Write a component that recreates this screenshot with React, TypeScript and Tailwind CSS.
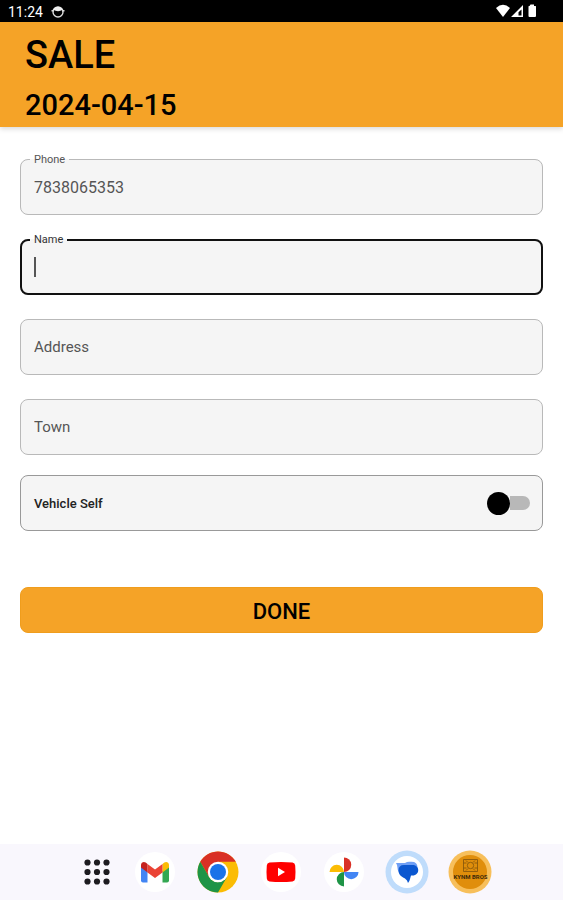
import React, { useState } from 'react';

const Field: React.FC<{ id: string; label: string; value: string; onChange: (value: string) => void }> = ({
  id,
  label,
  value,
  onChange,
}) => (
  <div className="h-14 rounded-lg border border-[#b9b9b9] bg-[#f5f5f5]">
    <input
      id={id}
      type="text"
      aria-label={label}
      placeholder={label}
      value={value}
      onChange={(e) => onChange(e.target.value)}
      className="h-full w-full bg-transparent px-[13px] text-[15px] text-[#444] outline-none placeholder:text-[#555]"
    />
  </div>
);

const StatusBar = () => (
  <div className="flex h-[22px] items-end justify-between bg-black pr-[23px] pl-2 text-white">
    <div className="flex items-center gap-2 pb-0.5">
      <span className="text-[14px] leading-4">11:24</span>
      <svg className="h-3.5 w-3.5" viewBox="0 0 14 14" fill="none">
        <circle cx="7" cy="7" r="5" stroke="#ddd" strokeWidth="1.4" />
        <path d="M2.2 4.8C3 .8 11 .8 11.8 4.8Q7 7.5 2.2 4.8z" fill="#eee" />
        <path d="M0.5 5.8h2.5M11 5.8h2.5" stroke="#ddd" strokeWidth="1.4" />
      </svg>
    </div>
    <svg className="h-[22px] w-11" viewBox="0 0 44 22" fill="#fff">
      <path d="M0 8Q7 1.5 14 8L7 17z" />
      <path fillRule="evenodd" d="M27 5v12H15zM25.5 9.5v6H22.5V12.3z" />
      <path d="M34.500 4.500h3.500V6h1.500q.5 0 .5.500V16q0 1-1 1h-5.500q-1 0-1-1V6.500q0-.5.5-.5h.5z" />
    </svg>
  </div>
);

const AppsIcon = () => (
  <svg className="h-11 w-11" viewBox="0 0 44 44" fill="#1d1b20">
    {[12.5, 22, 31.5].map((cy) =>
      [12.5, 22, 31.5].map((cx) => <circle key={`${cx}-${cy}`} cx={cx} cy={cy} r="3.1" />)
    )}
  </svg>
);

const GmailIcon = () => (
  <svg className="h-11 w-11" viewBox="0 0 44 44">
    <circle cx="22" cy="22" r="20" fill="#fff" />
    <path d="M8 16l6.5 5v11.5H10q-2 0-2-2z" fill="#4285f4" />
    <path d="M36 16l-6.5 5v11.5H34q2 0 2-2z" fill="#34a853" />
    <path d="M29.5 14l1.8-1.4C33.3 11.2 36 12.5 36 15v2.6L29.5 22.5z" fill="#fbbc04" />
    <path d="M14.5 22.5V14L22 19.6 29.5 14v8.5L22 28z" fill="#ea4335" />
    <path d="M8 17.6V15c0-2.5 2.7-3.8 4.7-2.4L14.5 14v8.5z" fill="#c5221f" />
  </svg>
);

const ChromeIcon = () => (
  <svg className="h-11 w-11" viewBox="0 0 44 44">
    <circle cx="22" cy="22" r="20.5" fill="#fbbc04" />
    <path d="M4.25 11.75A20.5 20.5 0 0 1 39.75 11.75L22 11.75 13.1 27.1z" fill="#d93025" />
    <path d="M4.25 11.75L13.12 27.12Q16.5 32.5 22 32.25L30.88 27.13 22 42.5A20.5 20.5 0 0 1 4.25 11.75z" fill="#1e9446" />
    <circle cx="22" cy="22" r="10.25" fill="#fff" />
    <circle cx="22" cy="22" r="8" fill="#1a73e8" />
  </svg>
);

const YouTubeIcon = () => (
  <svg className="h-11 w-11" viewBox="0 0 44 44">
    <circle cx="22" cy="22" r="20" fill="#fff" />
    <path d="M10.5 12.6Q22 11.4 33.5 12.6 36 13 36.2 15.5 36.8 22 36.2 28.5 36 31 33.5 31.4 22 32.6 10.5 31.4 8 31 7.8 28.5 7.2 22 7.8 15.5 8 13 10.5 12.6z" fill="#f00" />
    <path d="M19 17.8v8.4l7-4.2z" fill="#fff" />
  </svg>
);

const PhotosIcon = () => (
  <svg className="h-11 w-11" viewBox="0 0 44 44">
    <circle cx="22" cy="22" r="20" fill="#fff" />
    <path d="M22 7.5a7.2 7.2 0 0 1 0 14.5z" fill="#d93025" />
    <path d="M36.5 22a7.2 7.2 0 0 1-14.5 0z" fill="#4285f4" />
    <path d="M22 36.5a7.2 7.2 0 0 1 0-14.5z" fill="#1e9446" />
    <path d="M7.5 22a7.2 7.2 0 0 1 14.5 0z" fill="#fbbc04" />
  </svg>
);

const MessagesIcon = () => (
  <svg className="h-11 w-11" viewBox="0 0 44 44">
    <circle cx="22" cy="22" r="21.5" fill="#bfdcfb" />
    <circle cx="22" cy="22" r="16" fill="#fff" />
    <path d="M11 13h9q2-1.2 4-1.2h2.5q6 0 6 5.7T26.500 23.500H18q-5.500 0-5.500-5.500 0-3-1.500-5z" fill="#6f9ff5" />
    <path d="M19 15h8.500c7.700 0 7.700 10.500 0 10.500H26q-.5 1.500-1 3.500-.5 2.500-2 4-.5-3-3-4.500c-2-1.200-6.500-3-6.500-8Q13.500 15 19 15z" fill="#0b57d0" />
  </svg>
);

const StoreIcon = () => (
  <svg className="h-11 w-11" viewBox="0 0 44 44">
    <circle cx="22" cy="22" r="21.5" fill="#f7bf5b" />
    <circle cx="22" cy="22" r="17" fill="#e08e0b" />
    <g fill="none" stroke="#80530d" strokeWidth="0.8">
      <path d="M15.5 9.5h14v12h-14zM15.5 13h3M26.5 13h3M15.5 18h3M26.5 18h3" />
      <circle cx="22.5" cy="15.5" r="3.2" />
      <path d="M20 12.5l-2-2M25 12.5l2-2M20 18.5l-2 2M25 18.5l2 2" />
    </g>
    <text x="22.5" y="29" textAnchor="middle" fill="#3d2a0a" fontSize="6" fontWeight="700">
      KYNM BROS
    </text>
  </svg>
);

const DOCK_APPS = [
  { name: 'Gmail', Icon: GmailIcon },
  { name: 'Chrome', Icon: ChromeIcon },
  { name: 'YouTube', Icon: YouTubeIcon },
  { name: 'Photos', Icon: PhotosIcon },
  { name: 'Messages', Icon: MessagesIcon },
  { name: 'Store', Icon: StoreIcon },
];

const App: React.FC = () => {
  const [phone, setPhone] = useState('7838065353');
  const [name, setName] = useState('');
  const [address, setAddress] = useState('');
  const [town, setTown] = useState('');
  const [vehicleSelf, setVehicleSelf] = useState(false);

  return (
    <div className="flex min-h-screen flex-col bg-white font-['Roboto',sans-serif] text-black">
      <StatusBar />

      {/* Header */}
      <header className="bg-[#f5a327] px-[25px] pt-[13px] pb-1 font-medium shadow-[0_2px_5px_rgba(0,0,0,0.15)]">
        <h1 className="text-[38px] leading-10">SALE</h1>
        <p className="mt-3 text-[29px] leading-9">2024-04-15</p>
      </header>

      <form className="flex flex-col px-5 pt-[26px]" onSubmit={(e) => e.preventDefault()}>
        {/* Floating label sits in the notch of the border */}
        <fieldset className="h-[62px] rounded-lg border border-[#b9b9b9] bg-[#f5f5f5]">
          <legend className="ml-[9px] px-1 text-[11px] leading-[13px] text-[#555]">
            <label htmlFor="phone">Phone</label>
          </legend>
          <input
            id="phone"
            type="tel"
            value={phone}
            onChange={(e) => setPhone(e.target.value)}
            className="h-[42px] w-full bg-transparent px-[13px] text-base text-[#555] outline-none"
          />
        </fieldset>

        <fieldset className="mt-[18px] h-[62px] rounded-lg border-2 border-[#111] bg-[#f5f5f5]">
          <legend className="ml-2 px-1 text-[11px] leading-[13px] text-[#333]">
            <label htmlFor="name">Name</label>
          </legend>
          <div className="flex h-[42px] items-center px-3">
            {name === '' && <span className="h-5 w-0.5 bg-[#555]" />}
            <input
              id="name"
              type="text"
              value={name}
              onChange={(e) => setName(e.target.value)}
              className="h-full min-w-0 flex-1 bg-transparent text-base text-[#333] outline-none"
            />
          </div>
        </fieldset>

        <div className="mt-6 flex flex-col gap-6">
          <Field id="address" label="Address" value={address} onChange={setAddress} />
          <Field id="town" label="Town" value={town} onChange={setTown} />
        </div>

        <label className="mt-5 flex h-14 items-center justify-between rounded-lg border border-[#999] bg-[#f5f5f5] pr-3 pl-[13px]">
          <span className="pt-0.5 text-[13px] font-medium text-[#222]">Vehicle Self</span>
          <input
            type="checkbox"
            role="switch"
            checked={vehicleSelf}
            onChange={(e) => setVehicleSelf(e.target.checked)}
            className="peer sr-only"
          />
          <span className="flex h-6 w-[43px] items-center peer-checked:flex-row-reverse">
            <span className="h-[23px] w-[23px] rounded-full bg-black" />
            <span className="h-3.5 flex-1 rounded-r-full bg-[#b8b8b8]" />
          </span>
        </label>

        <button
          type="submit"
          className="mt-14 h-[46px] rounded-lg border border-[#f09d1c] bg-[#f5a327] pt-0.5 text-[22px] font-medium"
        >
          DONE
        </button>
      </form>

      {/* Dock */}
      <nav className="mt-auto flex h-14 items-center justify-center gap-3.5 bg-[#f9f7fd] pl-1">
        <button type="button" aria-label="All apps">
          <AppsIcon />
        </button>
        <div className="flex gap-[19px]">
          {DOCK_APPS.map(({ name, Icon }) => (
            <button key={name} type="button" aria-label={name}>
              <Icon />
            </button>
          ))}
        </div>
      </nav>
    </div>
  );
};

export default App;
